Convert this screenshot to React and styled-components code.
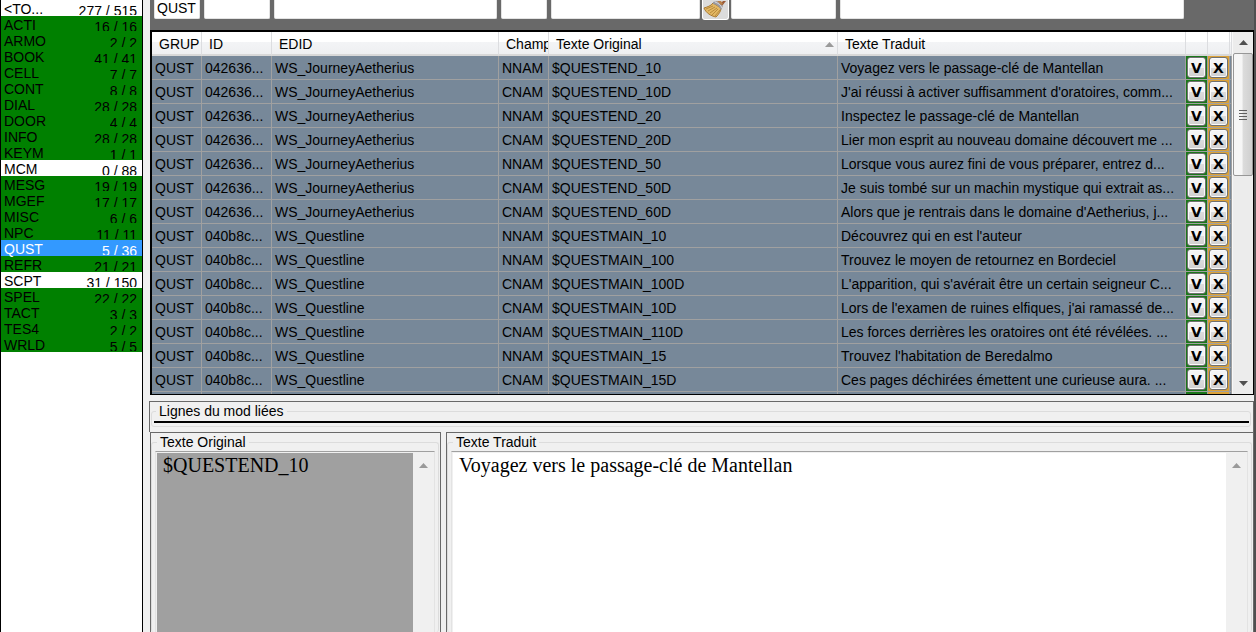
import React, { useState } from "react";
import styled, { createGlobalStyle } from "styled-components";

const groups = [
    ["<TO...", "277 / 515", "open"],
    ["ACTI", "16 / 16"],
    ["ARMO", "2 / 2"],
    ["BOOK", "41 / 41"],
    ["CELL", "7 / 7"],
    ["CONT", "8 / 8"],
    ["DIAL", "28 / 28"],
    ["DOOR", "4 / 4"],
    ["INFO", "28 / 28"],
    ["KEYM", "1 / 1"],
    ["MCM", "0 / 88", "open"],
    ["MESG", "19 / 19"],
    ["MGEF", "17 / 17"],
    ["MISC", "6 / 6"],
    ["NPC", "11 / 11"],
    ["QUST", "5 / 36", "selected"],
    ["REFR", "21 / 21"],
    ["SCPT", "31 / 150", "open"],
    ["SPEL", "22 / 22"],
    ["TACT", "3 / 3"],
    ["TES4", "2 / 2"],
    ["WRLD", "5 / 5"],
];

const journey = ["042636...", "WS_JourneyAetherius"];
const questline = ["040b8c...", "WS_Questline"];

const lines = [
    [...journey, "NNAM", "$QUESTEND_10", "Voyagez vers le passage-clé de Mantellan"],
    [...journey, "CNAM", "$QUESTEND_10D", "J'ai réussi à activer suffisamment d'oratoires, comm..."],
    [...journey, "NNAM", "$QUESTEND_20", "Inspectez le passage-clé de Mantellan"],
    [...journey, "CNAM", "$QUESTEND_20D", "Lier mon esprit au nouveau domaine découvert me ..."],
    [...journey, "NNAM", "$QUESTEND_50", "Lorsque vous aurez fini de vous préparer, entrez d..."],
    [...journey, "CNAM", "$QUESTEND_50D", "Je suis tombé sur un machin mystique qui extrait as..."],
    [...journey, "CNAM", "$QUESTEND_60D", "Alors que je rentrais dans le domaine d'Aetherius, j..."],
    [...questline, "NNAM", "$QUESTMAIN_10", "Découvrez qui en est l'auteur"],
    [...questline, "NNAM", "$QUESTMAIN_100", "Trouvez le moyen de retournez en Bordeciel"],
    [...questline, "CNAM", "$QUESTMAIN_100D", "L'apparition, qui s'avérait être un certain seigneur C..."],
    [...questline, "CNAM", "$QUESTMAIN_10D", "Lors de l'examen de ruines elfiques, j'ai ramassé de..."],
    [...questline, "CNAM", "$QUESTMAIN_110D", "Les forces derrières les oratoires ont été révélées. ..."],
    [...questline, "NNAM", "$QUESTMAIN_15", "Trouvez l'habitation de Beredalmo"],
    [...questline, "CNAM", "$QUESTMAIN_15D", "Ces pages déchirées émettent une curieuse aura. ..."],
];

function App() {
    const [filter, setFilter] = useState("QUST");
    const [original, setOriginal] = useState("$QUESTEND_10");
    const [translated, setTranslated] = useState(
        "Voyagez vers le passage-clé de Mantellan"
    );

    return (
        <Page>
            <GlobalStyle />
            <Sidebar>
                {groups.map(([name, count, status]) => (
                    <Group key={name} $status={status}>
                        <span>{name}</span>
                        <Count>{count}</Count>
                    </Group>
                ))}
            </Sidebar>
            <Main>
                <FilterBar>
                    <Filter
                        aria-label="GRUP"
                        $width={46}
                        value={filter}
                        onChange={(e) => setFilter(e.target.value)}
                    />
                    <Filter aria-label="ID" $width={66} />
                    <Filter aria-label="EDID" $width={223} />
                    <Filter aria-label="Champ" $width={46} />
                    <FilterGroup>
                        <Filter aria-label="Texte Original" $width={149} />
                        <ClearButton aria-label="Effacer">
                            <Broom />
                        </ClearButton>
                        <Filter aria-label="Texte Original exclu" $width={105} />
                    </FilterGroup>
                    <Filter aria-label="Texte Traduit" />
                </FilterBar>
                <GridPane>
                    <TableWrap>
                        <Table>
                            <colgroup>
                                <Col $width={50} />
                                <Col $width={70} />
                                <Col $width={227} />
                                <Col $width={50} />
                                <Col $width={289} />
                                <Col />
                                <Col $width={22} />
                                <Col $width={22} />
                                <Col $width={2} />
                            </colgroup>
                            <thead>
                                <tr>
                                    <Th>GRUP</Th>
                                    <Th>ID</Th>
                                    <Th>EDID</Th>
                                    <Th>Champ</Th>
                                    <Th>
                                        <SortLabel>
                                            Texte Original
                                            <Arrow />
                                        </SortLabel>
                                    </Th>
                                    <Th>Texte Traduit</Th>
                                    <Th />
                                    <Th />
                                    <Th />
                                </tr>
                            </thead>
                            <tbody>
                                {lines.map((line) => (
                                    <Line key={line[3]} line={line} />
                                ))}
                                <tr>
                                    <Td />
                                    <Td />
                                    <Td />
                                    <Td />
                                    <Td />
                                    <Td />
                                    <ActionTd $color="#1a781a" />
                                    <ActionTd $color="#dca238" />
                                    <Td />
                                </tr>
                            </tbody>
                        </Table>
                    </TableWrap>
                    <ScrollBar>
                        <ScrollEnd>
                            <Arrow $dark />
                        </ScrollEnd>
                        <Thumb>
                            <i />
                            <i />
                            <i />
                            <i />
                        </Thumb>
                        <ScrollEnd $last>
                            <Arrow $down $dark />
                        </ScrollEnd>
                    </ScrollBar>
                </GridPane>
                <LinkedPane>
                    <LinkedBox>
                        <legend>Lignes du mod liées</legend>
                        <Rule />
                    </LinkedBox>
                </LinkedPane>
                <Editors>
                    <EditorPane $width={291}>
                        <EditorBox>
                            <legend>
                                <label htmlFor="original">Texte Original</label>
                            </legend>
                            <Editor>
                                <TextArea
                                    id="original"
                                    $color="#a0a0a0"
                                    value={original}
                                    onChange={(e) => setOriginal(e.target.value)}
                                />
                                <EditorScroll>
                                    <Arrow />
                                </EditorScroll>
                            </Editor>
                        </EditorBox>
                    </EditorPane>
                    <EditorPane>
                        <EditorBox>
                            <legend>
                                <label htmlFor="translated">Texte Traduit</label>
                            </legend>
                            <Editor>
                                <TextArea
                                    id="translated"
                                    $color="#ffffff"
                                    value={translated}
                                    onChange={(e) => setTranslated(e.target.value)}
                                />
                                <EditorScroll>
                                    <Arrow />
                                </EditorScroll>
                            </Editor>
                        </EditorBox>
                    </EditorPane>
                </Editors>
            </Main>
        </Page>
    );
}

export default App;

function Line({ line }) {
    return (
        <tr>
            <Td>QUST</Td>
            {line.map((text, i) => (
                <Td key={i}>{text}</Td>
            ))}
            <ActionTd $color="#1a781a">
                <ActionButton>V</ActionButton>
            </ActionTd>
            <ActionTd $color="#dca238">
                <ActionButton>X</ActionButton>
            </ActionTd>
            <Td />
        </tr>
    );
}

function Broom() {
    return (
        <svg width="24" height="18" viewBox="0 0 24 18">
            <path d="M17 3 L20 0 L23 0 L19 5 Z" fill="#9a5a38" />
            <path
                d="M10 2 C8 5 4 6 1 7 C3 12 8 15 13 16 C16 13 18 10 18 7 Z"
                fill="#e3b863"
                stroke="#a87932"
            />
            <path
                d="M3 8 L10 5 M5 10 L12 6 M7 12 L14 7 M9 14 L15 8 M12 15 L17 9"
                stroke="#b98a3e"
                fill="none"
            />
            <path d="M10 1 L14 0 L20 5 L18 9 C16 5 13 3 10 3 Z" fill="#9a9aa0" />
            <path d="M12 1 C15 2 18 4 19 7" stroke="#d8d8dc" fill="none" />
            <path d="M14 0 L18 0 L20 3 L18 4 Z" fill="#b9814a" />
        </svg>
    );
}

function Arrow({ $down, $dark }) {
    return (
        <svg width="9" height="5" viewBox="0 0 9 5">
            <path
                d={$down ? "M0 0 L9 0 L4.5 5 Z" : "M0 5 L9 5 L4.5 0 Z"}
                fill={$dark ? "#505050" : "#9a9a9a"}
            />
        </svg>
    );
}

const GlobalStyle = createGlobalStyle`
    * {
        box-sizing: border-box;
    }
    body {
        margin: 0;
        background-color: #f0f0f0;
        color: #000;
        font: 14px/16px "Liberation Sans", Arial, sans-serif;
    }
    button, input {
        font: inherit;
        color: inherit;
    }
`;

const Page = styled.div`
    display: flex;
    height: 100vh;
    overflow: hidden;
`;

const Sidebar = styled.div`
    flex: 0 0 143px;
    background-color: white;
    border: solid black;
    border-width: 0 1px;
`;

const Group = styled.div`
    display: flex;
    justify-content: space-between;
    height: 16px;
    padding: 0 5px 0 3px;
    line-height: 18px;
    background-color: ${({ $status }) =>
        $status === "open"
            ? "white"
            : $status === "selected"
            ? "#3399ff"
            : "#008000"};
    color: ${({ $status }) => ($status === "selected" ? "white" : "black")};
`;

const Count = styled.span`
    height: 15px;
    line-height: 22px;
    overflow: hidden;
`;

const Main = styled.div`
    flex: 1;
    min-width: 0;
    display: flex;
    flex-direction: column;
    margin-left: 6px;
    border-right: 2px solid #505050;
`;

const FilterBar = styled.div`
    display: flex;
    gap: 4px;
    height: 30px;
    padding: 0 70px 11px 4px;
    margin-left: 1px;
    background-color: #696969;
`;

const FilterGroup = styled.div`
    display: flex;
    gap: 2px;
`;

const Filter = styled.input`
    min-width: 0;
    height: 19px;
    width: ${({ $width }) => ($width ? `${$width}px` : "auto")};
    flex: ${({ $width }) => ($width ? "none" : "1")};
    padding: 0 2px 2px;
    background-color: white;
    border: 1px solid #e3e3e3;
    border-top: none;
    border-radius: 0 0 2px 2px;
`;

const ClearButton = styled.button`
    width: 27px;
    height: 20px;
    padding: 0;
    border: 1px solid white;
    border-top: none;
    border-radius: 0 0 3px 3px;
    background-color: #dcdcdc;
    svg {
        display: block;
    }
`;

const GridPane = styled.div`
    flex: 0 0 365px;
    min-height: 0;
    display: flex;
    margin-left: 1px;
    border: 2px solid black;
    border-width: 2px 1px 1px 2px;
    background-color: #f0f0f0;
`;

const TableWrap = styled.div`
    flex: 1;
    min-width: 0;
    overflow: hidden;
`;

const Table = styled.table`
    width: 100%;
    table-layout: fixed;
    border-collapse: separate;
    border-spacing: 0;
`;

const Col = styled.col`
    width: ${({ $width }) => ($width ? `${$width}px` : "auto")};
`;

const Th = styled.th`
    height: 24px;
    padding: 2px 0 0 7px;
    font-weight: normal;
    text-align: left;
    white-space: nowrap;
    overflow: hidden;
    background: linear-gradient(#ffffff 45%, #f3f4f6 46%, #eeeff1);
    border-right: 1px solid #dcdde0;
    border-bottom: 2px solid #d8d8d8;
    &:last-child {
        padding: 0;
    }
`;

const SortLabel = styled.div`
    display: flex;
    align-items: center;
    justify-content: space-between;
    padding-right: 3px;
`;

const Td = styled.td`
    height: 24px;
    padding: 0 0 0 3px;
    white-space: nowrap;
    overflow: hidden;
    background-color: #778899;
    border-right: 1px solid #a0a0a0;
    border-bottom: 1px solid #a0a0a0;
    &:last-child {
        padding: 0;
    }
`;

const ActionTd = styled(Td)`
    padding: 1px;
    background-color: ${({ $color }) => $color};
`;

const ActionButton = styled.button`
    display: block;
    width: 19px;
    height: 21px;
    padding: 0;
    border: 1px solid #707070;
    border-radius: 3px;
    background: linear-gradient(#f4f4f4 50%, #dddddd 51%, #d0d0d0);
    box-shadow: inset 0 0 0 1px #fafafa;
    font: bold 14px/16px "DejaVu Sans", Verdana, sans-serif;
`;

const ScrollBar = styled.div`
    flex: 0 0 21px;
    display: flex;
    flex-direction: column;
    background-color: #ececec;
    border-left: 1px solid #f8f8f8;
`;

const ScrollEnd = styled.div`
    display: flex;
    align-items: center;
    justify-content: center;
    height: 21px;
    margin-top: ${({ $last }) => ($last ? "auto" : "0")};
`;

const Thumb = styled.div`
    display: flex;
    flex-direction: column;
    align-items: center;
    justify-content: center;
    gap: 2px;
    height: 123px;
    border: 1px solid #979797;
    border-radius: 2px;
    background: linear-gradient(to right, #f6f6f6 45%, #dcdcdc 50%, #cfcfcf);
    i {
        width: 8px;
        height: 1px;
        background-color: #606060;
    }
`;

const LinkedPane = styled.div`
    margin-top: 6px;
    height: 31px;
    padding: 1px 2px 0 1px;
    border: 1px solid #696969;
    border-bottom: none;
`;

const GroupBox = styled.fieldset`
    min-width: 0;
    margin: 0;
    border: 1px solid #dcdcdc;
    border-radius: 3px;
    legend {
        padding: 0 3px;
        margin-left: 2px;
    }
`;

const LinkedBox = styled(GroupBox)`
    height: 24px;
    padding: 0 1px 0 2px;
`;

const Rule = styled.hr`
    margin: 2px 0 0;
    border: none;
    height: 2px;
    background-color: black;
`;

const Editors = styled.div`
    flex: 1;
    min-height: 0;
    display: flex;
    gap: 5px;
    margin-left: 1px;
`;

const EditorPane = styled.div`
    flex: ${({ $width }) => ($width ? `0 0 ${$width}px` : "1")};
    display: flex;
    min-width: 0;
    padding: 1px 1px 0 0;
    border: 1px solid #696969;
    border-bottom: none;
`;

const EditorBox = styled(GroupBox)`
    flex: 1;
    display: flex;
    padding: 0 3px;
    border-bottom: none;
`;

const Editor = styled.div`
    display: flex;
    height: 100%;
    flex: 1;
    margin-top: 1px;
    border: 1px solid #e3e3e3;
    border-top-color: #a0a0a0;
    border-bottom: none;
`;

const TextArea = styled.textarea`
    flex: 1;
    min-width: 0;
    margin: 1px 0 0 1px;
    padding: 1px 6px;
    border: none;
    outline: none;
    resize: none;
    overflow: hidden;
    background-color: ${({ $color }) => $color};
    color: black;
    font: 20px/22px "Liberation Serif", "Times New Roman", serif;
`;

const EditorScroll = styled.div`
    flex: 0 0 21px;
    padding-top: 9px;
    text-align: center;
    line-height: 5px;
    background-color: #f0f0f0;
`;
